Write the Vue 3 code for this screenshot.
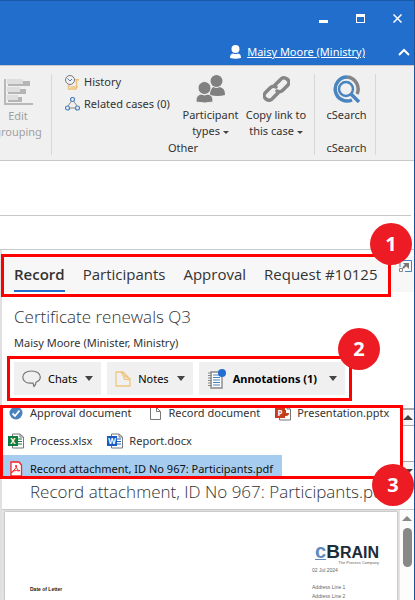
<template>
  <div class="window">
    <header class="titlebar">
      <div class="window-controls">
        <button aria-label="Minimize"><svg width="9" height="9" viewBox="0 0 9 9"><path d="M0 6h9v3H0z" fill="#fff" /></svg></button>
        <button aria-label="Maximize"><svg width="9" height="9" viewBox="0 0 9 9"><path fill-rule="evenodd" d="M0 0h9v9H0zM1 3v5h7V3z" fill="#fff" /></svg></button>
        <button aria-label="Close"><svg width="9" height="9" viewBox="0 0 9 9"><path d="M.5 .5l8 8M8.500 .5l-8 8" stroke="#fff" stroke-width="1.500" /></svg></button>
      </div>
      <div class="user-row">
        <svg width="11" height="14" viewBox="0 0 11 14" fill="#fff"><circle cx="5.500" cy="4" r="4" /><path d="M0 13C0 10 1 9 3 8.500Q5.500 9.500 8 8.500C10 9 11 10 11 13Q5.500 14.500 0 13z" /></svg>
        <a href="#">Maisy Moore (Ministry)</a>
        <button class="collapse" aria-label="Collapse ribbon"><svg width="12" height="8" viewBox="0 0 12 8"><path d="M1 7l5-5 5 5" fill="none" stroke="#fff" stroke-width="2" /></svg></button>
      </div>
    </header>

    <div class="ribbon">
      <section class="group group-edit">
        <button class="big" disabled>
          <svg width="29" height="27" viewBox="0 0 29 27">
            <path d="M1 0v25h28" fill="none" stroke="#b9b9b9" stroke-width="2" />
            <path d="M4 2h22v5H4zM4 10h18v5H4zM4 18h14v5H4z" fill="#b5b5b5" />
            <path d="M3 0h16v5H3zM3 8h13v5H3zM3 16h11v5H3z" fill="#dedede" />
          </svg>
          <span>Edit<br>grouping</span>
        </button>
      </section>
      <section class="group group-other">
        <div class="group-body">
          <div class="links">
            <button class="small">
              <svg width="15" height="15" viewBox="0 0 15 15" fill="none">
                <path d="M9 4.700h5M11.500 5v7M5 11h-1.500v3H11l1-2H5.500M12 5" stroke="#ecc277" stroke-width="1.500" />
                <circle cx="5" cy="5" r="4.500" fill="#f0f0f0" stroke="#777" />
                <path d="M2.500 3.500L5 6l2-2" stroke="#4a82bd" />
              </svg>
              <span>History</span>
            </button>
            <button class="small">
              <svg width="15" height="14" viewBox="0 0 15 14" fill="none">
                <path d="M6.500 4L3 9M8.500 4L12 9M5 11h5" stroke="#888" />
                <g stroke="#4a82bd" stroke-width="1.200"><circle cx="7.500" cy="2.500" r="2" /><circle cx="2.500" cy="11" r="2" /><circle cx="12.500" cy="11" r="2" /></g>
              </svg>
              <span>Related cases (0)</span>
            </button>
          </div>
          <button class="big participant">
            <svg width="29" height="28" viewBox="0 0 29 28" fill="#808080">
              <circle cx="20.500" cy="6" r="6" /><path d="M14 20c0-6 2-7 3.500-8q3 2 6 0c4 1 5.500 3 5.500 8q-7 2-15 0z" />
              <g stroke="#f0f0f0"><circle cx="8.500" cy="13" r="6.500" /><path d="M0 27c0-6 2-7 5-8q3.500 2 7 0c3 1 5 2 5 8q-8 2-17 0z" /></g>
            </svg>
            <span>Participant<br>types <i class="caret"></i></span>
          </button>
          <button class="big copy">
            <svg width="27" height="28" viewBox="0 0 27 28" fill="none" stroke="#868686" stroke-width="3.500" stroke-linecap="round">
              <path d="M12 10l5-5q3-4 7-1t0 7l-4 4q-3 3-6 1" />
              <path d="M15 18l-5 5q-3 4-7 1t0-7l4-4q3-3 6-1" />
            </svg>
            <span>Copy link to<br>this case <i class="caret"></i></span>
          </button>
        </div>
        <div class="group-name">Other</div>
      </section>
      <section class="group group-search">
        <button class="big">
          <svg width="29" height="28" viewBox="0 0 29 28" fill="none">
            <path d="M15 2A12 12 0 0 1 25 19" stroke="#858585" stroke-width="3.500" />
            <path d="M15 2A12 12 0 1 0 20 25" stroke="#4a85bf" stroke-width="3.500" />
            <circle cx="14" cy="14" r="7" stroke="#4a85bf" stroke-width="2.500" />
            <path d="M19 19l8 8" stroke="#4a85bf" stroke-width="3.500" />
          </svg>
          <span>cSearch</span>
        </button>
        <div class="group-name">cSearch</div>
      </section>
    </div>

    <div class="band band-tall"></div>
    <div class="band"></div>

    <main class="panel">
      <nav class="tabs">
        <button v-for="tab in tabs" :key="tab" :class="{ active: tab === activeTab }" @click="activeTab = tab">{{ tab }}</button>
        <button class="popout" aria-label="Open in new window">
          <svg width="13" height="12" viewBox="0 0 13 12" fill="none">
            <path d="M1 7V.5h11.500v11H6" stroke="#4a82bd" />
            <path d="M.5 8.500h3v3h-3z" stroke="#888" />
            <path d="M4 8l4-4" stroke="#777" stroke-width="2" /><path d="M4 3h6v6z" fill="#777" />
          </svg>
        </button>
        <div class="frame frame-tabs"><b class="marker">1</b></div>
      </nav>

      <div class="heading">
        <h1>Certificate renewals Q3</h1>
        <p>Maisy Moore (Minister, Ministry)</p>
      </div>

      <div class="tools">
        <button class="chats">
          <svg width="19" height="18" viewBox="0 0 19 18"><path d="M9.500 1C4 1 .8 3.500 .8 7s3 6 7.200 6.200c1 0 2-.2 3-.2l1 3.500c1.500-1.200 2-2.500 2-4.200 2.500-1 4.300-2.800 4.300-5.300C18.300 3.500 15 1 9.500 1z" fill="none" stroke="#777" stroke-width="1.200" /></svg>
          <span>Chats</span><i class="caret large"></i>
        </button>
        <button class="notes">
          <svg width="16" height="16" viewBox="0 0 16 16"><path d="M1 1h7l7 7v7H1zM8 1v3l7 4q-1 1-6 0M5 1q4 2 4 7" fill="none" stroke="#eec680" stroke-width="1.300" /></svg>
          <span>Notes</span><i class="caret large"></i>
        </button>
        <button class="annotations">
          <svg width="19" height="20" viewBox="0 0 19 20">
            <path d="M4 3h11v16H4z" fill="#fff" stroke="#888" stroke-width="1.400" />
            <path d="M1 4h4M1 6.500h4M1 9h4M1 11.500h4M1 14h4M1 16.500h4" stroke="#888" />
            <path d="M6 6h7M6 8.500h7M6 11h7M6 13.500h7M6 16h7" stroke="#4a82bd" stroke-width="1.200" />
            <circle cx="15" cy="4" r="4" fill="#216ecf" />
          </svg>
          <span>Annotations (1)</span><i class="caret large"></i>
        </button>
        <div class="frame frame-tools"><b class="marker">2</b></div>
      </div>

      <section class="files">
        <div class="file-list">
          <a v-for="file in files" :key="file.name" href="#" class="file" :class="{ selected: file.selected }">
            <svg v-if="file.kind === 'check'" width="16" height="16" viewBox="0 0 16 16"><circle cx="8" cy="8" r="6.500" fill="#4a82bd" /><path d="M4.500 8.500L7 11l4.500-5.500" fill="none" stroke="#fff" stroke-width="1.800" /></svg>
            <svg v-else-if="file.kind === 'blank'" width="16" height="16" viewBox="0 0 16 16"><path d="M3.500 2.500h6l4 4v8h-10zM9.500 2.500v4h4" fill="#fff" stroke="#777" /></svg>
            <svg v-else-if="file.kind === 'pdf'" width="16" height="16" viewBox="0 0 16 16"><path d="M3 1h8l2.500 3v11H3z" fill="#fff" stroke="#f22" stroke-width="1.300" /><path d="M8 4q1 0 .5 2.500c1 3 2 3 3.500 3q-1 1-3.500 0-3-.2-4 1.500-1 1.500-1 0Q6.500 9.500 8 6.500 7 4.500 8 4z" fill="none" stroke="#f22" /></svg>
            <svg v-else width="16" height="16" viewBox="0 0 16 16">
              <path d="M4.500 1h7.500l3.500 3v11h-11zM12 1v3h3" fill="#fff" stroke="#777" />
              <path v-if="file.kind !== 'ppt'" d="M10 6h4M10 8.500h4M10 11h4" :stroke="file.color" />
              <path v-else d="M10 5v6h1a3 3 0 0 0 3-3h-3V5z" :fill="file.color" />
              <path d="M0 3h10v10H0z" :fill="file.color" />
              <text x="5" y="11" text-anchor="middle" class="letter">{{ file.letter }}</text>
            </svg>
            <span>{{ file.name }}</span>
          </a>
        </div>
        <div class="list-scroll" aria-hidden="true">
          <i class="arrow up"></i>
          <div class="thumb"></div>
          <i class="arrow down"></i>
        </div>
        <div class="frame frame-files"><b class="marker">3</b></div>
      </section>

      <h2>Record attachment, ID No 967: Participants.pdf</h2>

      <div class="viewer">
        <article class="page">
          <div class="letter-date">Date of Letter</div>
          <div class="letter-head">
            <div class="brand"><span class="c">c</span><span class="b">B</span>RAIN</div>
            <div class="slogan">The Process Company</div>
            <div class="address">02 Jul 2024</div>
            <div class="address gap">Address Line 1</div>
            <div class="address">Address Line 2</div>
          </div>
        </article>
        <div class="page-scroll" aria-hidden="true">
          <i class="arrow up"></i>
          <div class="thumb"></div>
        </div>
      </div>
    </main>
  </div>
</template>

<script setup>
import { ref } from 'vue'

const tabs = ['Record', 'Participants', 'Approval', 'Request #10125']
const activeTab = ref('Record')

const files = [
  { name: 'Approval document', kind: 'check' },
  { name: 'Record document', kind: 'blank' },
  { name: 'Presentation.pptx', kind: 'ppt', letter: 'P', color: '#c43e1c' },
  { name: 'Process.xlsx', kind: 'xls', letter: 'X', color: '#107c41' },
  { name: 'Report.docx', kind: 'doc', letter: 'W', color: '#185abd' },
  { name: 'Record attachment, ID No 967: Participants.pdf', kind: 'pdf', selected: true },
]
</script>

<style>
body { background: #fff; }
</style>

<style scoped>
.window {
  box-sizing: border-box;
  height: 100vh;
  overflow: hidden;
  display: flex;
  flex-direction: column;
  border-right: 1px solid #1b5299;
  font-family: "Noto Sans", "Open Sans", sans-serif;
  font-size: 11px;
  line-height: 16px;
  color: #333;
  white-space: nowrap;
}

.window * { box-sizing: border-box; }

svg { display: block; flex: none; }

button {
  border: none;
  background: none;
  padding: 0;
  margin: 0;
  font: inherit;
  color: inherit;
  white-space: nowrap;
}

a { color: inherit; }

.titlebar {
  flex: none;
  height: 66px;
  background: #216ecd;
  border-top: 1px solid #1b5aa8;
  border-bottom: 1px solid #c8c8c8;
  color: #fff;
}

.window-controls {
  display: flex;
  justify-content: flex-end;
  gap: 28px;
  padding: 13px 12px 0 0;
}

.user-row {
  display: flex;
  justify-content: flex-end;
  align-items: center;
  padding: 21px 4px 0 0;
}

.user-row a { margin-left: 6px; }
.collapse { margin-left: 33px; }

.ribbon {
  flex: none;
  display: flex;
  height: 95px;
  padding: 8px 0 5px;
  background: #f0f0f0;
  border-bottom: 1px solid #c8c8c8;
}

.group {
  display: flex;
  flex-direction: column;
  justify-content: space-between;
  border-right: 1px solid #d8d8d8;
}

.group-edit { width: 52px; }

.big {
  display: flex;
  flex-direction: column;
  align-items: center;
  gap: 4px;
  padding-top: 1px;
}

.big > span { text-align: center; }
.group-edit .big { color: #a0a0a0; width: 50px; margin: 4px 0 0 -7px; gap: 2px; }

.group-other { width: 263px; }
.group-body { display: flex; padding-left: 13px; }
.links { width: 117px; display: flex; flex-direction: column; gap: 6px; }
.small { display: flex; align-items: center; gap: 4px; }
.participant { width: 57px; }
.copy { width: 66px; margin-left: 4px; }
.group-name { text-align: center; line-height: 14px; }
.group-search { width: 61px; padding-left: 3px; }

.caret {
  display: inline-block;
  border: 3px solid transparent;
  border-top-color: #444;
  border-bottom: none;
  vertical-align: middle;
}

.caret.large { border-width: 5px 4px 0; margin-left: 8px; }

.band {
  flex: none;
  height: 34px;
  border-bottom: 1px solid #c8c8c8;
}

.band-tall { height: 55px; margin-right: 3px; }

.panel {
  flex: 1;
  min-height: 0;
  display: flex;
  flex-direction: column;
  border-left: 2px solid #e0e0e0;
}

.tabs {
  flex: none;
  position: relative;
  display: flex;
  height: 36px;
  margin-top: 6px;
  padding-left: 12px;
  gap: 18px;
  background: #f7f7f7;
  font-family: "Open Sans", "Noto Sans", sans-serif;
  font-size: 15px;
}

.tabs .active {
  font-weight: 600;
  border-bottom: 2px solid #216ecd;
  padding-top: 2px;
}

.tabs .popout {
  margin: 4px 2px 0 auto;
  align-self: flex-start;
}

.frame {
  position: absolute;
  border: 3px solid #f00;
  pointer-events: none;
}

.frame-tabs { inset: -2px 23px -5px -1px; }
.frame-tools { inset: -6px -7px; }
.frame-files { inset: 0 11px 0 -2px; }

.marker {
  position: absolute;
  width: 42px;
  line-height: 42px;
  border-radius: 50%;
  background: #ed1c24;
  color: #fff;
  font-size: 20px;
  text-align: center;
  z-index: 1;
}

.frame-tabs .marker { top: -34px; right: -24px; }
.frame-tools .marker { top: -31px; right: -31px; }
.frame-files .marker { bottom: -30px; right: -14px; }

.heading { flex: none; padding: 13px 12px 0; }

h1, h2 {
  margin: 0;
  font-family: "Open Sans", "Noto Sans", sans-serif;
  font-size: 17px;
  line-height: 24px;
  font-weight: 300;
  color: #333;
}

.heading p { margin: 6px 0 0; }

.tools {
  flex: none;
  position: relative;
  display: flex;
  align-self: flex-start;
  gap: 6px;
  height: 33px;
  margin: 11px 0 0 12px;
  color: #000;
}

.tools button {
  display: flex;
  align-items: center;
  padding: 0 8px;
  background: #f0f0f0;
}

.tools span { margin-left: 7px; }
.tools .annotations { font-weight: 700; }
.tools .annotations .caret { margin-left: 12px; }

.files {
  flex: none;
  position: relative;
  display: flex;
  height: 74px;
  margin-top: 10px;
}

.file-list {
  flex: 1;
  display: flex;
  flex-wrap: wrap;
  align-content: flex-end;
  gap: 4px 0;
  height: 74px;
  overflow: hidden;
}

.file {
  display: flex;
  align-items: center;
  gap: 6px;
  height: 24px;
  padding: 3px 9px 0 6px;
  text-decoration: none;
}

.file.selected { background: #a6cdf0; color: #111; }

.letter { font-size: 8px; font-weight: 700; fill: #fff; }

.list-scroll {
  display: flex;
  flex-direction: column;
  align-items: center;
  width: 12px;
  margin: 3px 0 2px;
  border-top: 2px solid #aaa;
  background: #f7f7f7;
}

.arrow { border: 5px solid transparent; }
.arrow.up { border-top: none; border-bottom-color: #444; margin-top: 5px; }
.arrow.down { border-bottom: none; border-top-color: #444; margin: 7px 0 3px; }
.list-scroll .thumb {
  flex: 1;
  width: 12px;
  margin-top: 5px;
  border: 1px solid #aaa;
  border-width: 1px 0;
  background: #fff;
}

h2 {
  flex: none;
  height: 31px;
  padding: 1px 0 0 28px;
  border-bottom: 1px solid #c8c8c8;
  overflow: hidden;
}

.viewer {
  flex: 1;
  min-height: 0;
  display: flex;
  padding: 2px 0 0 3px;
  background: #e4e4e4;
}

.page {
  flex: 1;
  display: flex;
  justify-content: space-between;
  padding: 0 18px 0 25px;
  background: #fff;
  box-shadow: 0 0 2px #999;
  font-family: "Liberation Sans", Arial, sans-serif;
  font-size: 5px;
  line-height: 9px;
  color: #666;
}

.letter-date { margin-top: 73px; font-weight: 700; color: #222; }
.letter-head { margin-top: 31px; }

.brand {
  height: 17px;
  font-size: 16px;
  line-height: 17px;
  font-weight: 700;
  color: #1c2c38;
  padding-left: 3px;
}

.brand .b { font-size: 19px; }
.brand .c {
  display: inline-block;
  height: 17px;
  font-size: 20px;
  color: #5d8bbd;
  border-bottom: 1px solid #5d8bbd;
}
.slogan { text-align: right; font-size: 4px; line-height: 6px; }
.address.gap { margin-top: 8px; }

.page-scroll {
  display: flex;
  flex-direction: column;
  align-items: center;
  width: 14px;
  margin: -2px 0 0 3px;
  background: #fcfcfc;
}

.page-scroll .arrow { border-bottom-color: #888; border-top: none; margin-top: 6px; }
.page-scroll .thumb {
  width: 9px;
  height: 39px;
  margin-top: 7px;
  border-radius: 5px;
  background: #888;
}
</style>
